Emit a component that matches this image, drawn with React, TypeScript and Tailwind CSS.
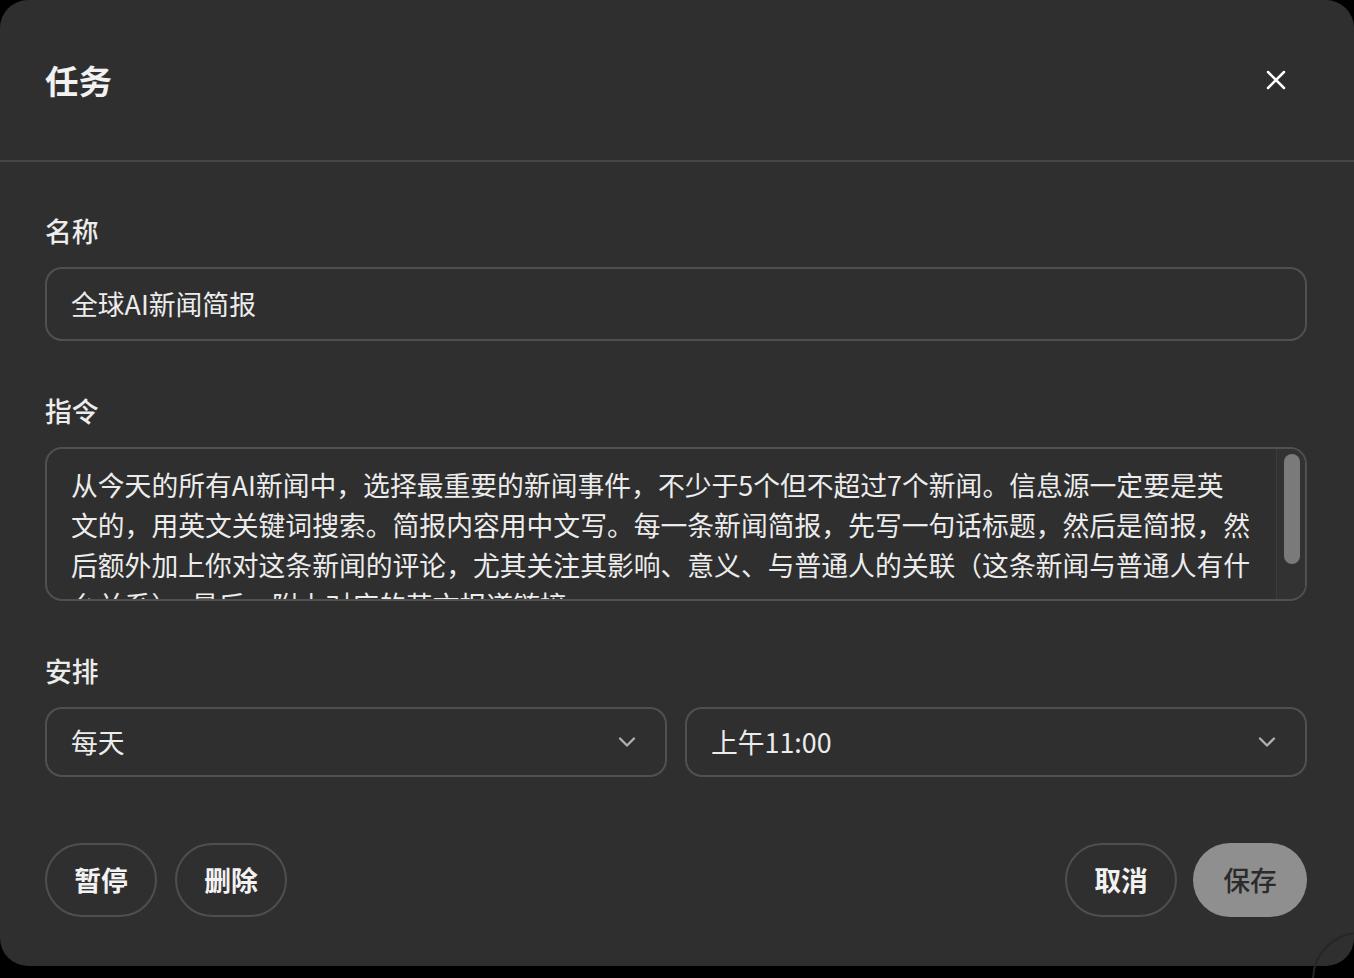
import React from "react"
import { ChevronDown } from "lucide-react"

const lines = [
  "从今天的所有AI新闻中，选择最重要的新闻事件，不少于5个但不超过7个新闻。信息源一定要是英",
  "文的，用英文关键词搜索。简报内容用中文写。每一条新闻简报，先写一句话标题，然后是简报，然",
  "后额外加上你对这条新闻的评论，尤其关注其影响、意义、与普通人的关联（这条新闻与普通人有什",
  "么关系）。最后，附上对应的英文报道链接。",
]

const Label: React.FC<{ children: React.ReactNode }> = ({ children }) => (
  <div className="text-[26.8px] leading-[40px] font-medium text-[#ececec] mb-4">{children}</div>
)

const Select: React.FC<{ value: string }> = ({ value }) => (
  <div className="h-[70px] rounded-[17px] border-2 border-[#505050] pl-[24px] pr-[24px] flex items-center justify-between">
    <span className="text-[26.8px] text-[#ececec]">{value}</span>
    <ChevronDown size={28} strokeWidth={2} className="text-[#b0b0b0]" />
  </div>
)

export default function App() {
  return (
    <div className="relative h-[978px] w-full overflow-hidden bg-black font-['Noto_Sans_CJK_SC',sans-serif]">
      <div className="h-[966px] w-full rounded-[28px] bg-[#2f2f2f] flex flex-col">
        {/* Header */}
        <div className="h-[162px] shrink-0 border-b-2 border-[#464646] pl-[45px] pr-[58px] flex items-center justify-between">
          <h2 className="text-[33.5px] font-semibold text-[#f2f2f2]">任务</h2>
          <button className="w-[40px] h-[40px] flex items-center justify-center">
            <svg width="20" height="20" viewBox="0 0 20 20" fill="none" stroke="#ffffff" strokeWidth="2.5" strokeLinecap="round">
              <path d="M2 2 18 18M18 2 2 18" />
            </svg>
          </button>
        </div>

        {/* Body */}
        <div className="pl-[45px] pr-[47px] pt-[49px] flex flex-col">
          <Label>名称</Label>
          <div className="h-[74px] rounded-[17px] border-2 border-[#505050] px-[24px] flex items-center">
            <span className="text-[26.8px] text-[#ececec]">全球AI新闻简报</span>
          </div>

          <div className="mt-[50px]">
            <Label>指令</Label>
            <div className="h-[154px] rounded-[17px] border-2 border-[#505050] flex overflow-hidden">
              <div className="flex-1 pl-[24px] pt-[16px] text-[26.8px] leading-[40px] text-[#ececec] overflow-hidden">
                {lines.map((l, i) => (
                  <div key={i} className="whitespace-nowrap">{l}</div>
                ))}
              </div>
              <div className="w-[29px] shrink-0 border-l border-[#3c3c3c] bg-[#323232] pl-[7px] pt-[5px]">
                <div className="w-[16px] h-[110px] rounded-full bg-[#7a7a7a]" />
              </div>
            </div>
          </div>

          <div className="mt-[50px]">
            <Label>安排</Label>
            <div className="grid grid-cols-2 gap-[18px]">
              <Select value="每天" />
              <Select value="上午11:00" />
            </div>
          </div>

          {/* Footer buttons */}
          <div className="mt-[66px] flex items-center justify-between">
            <div className="flex gap-[18px]">
              <button className="h-[74px] w-[112px] rounded-full border-2 border-[#4f4f4f] text-[26.8px] font-semibold text-[#f2f2f2]">暂停</button>
              <button className="h-[74px] w-[112px] rounded-full border-2 border-[#4f4f4f] text-[26.8px] font-semibold text-[#f2f2f2]">删除</button>
            </div>
            <div className="flex gap-[16px]">
              <button className="h-[74px] w-[112px] rounded-full border-2 border-[#4f4f4f] text-[26.8px] font-semibold text-[#f2f2f2]">取消</button>
              <button className="h-[74px] w-[114px] rounded-full bg-[#8f8f8f] text-[26.8px] font-medium text-[#2b2b2b]">保存</button>
            </div>
          </div>
        </div>
      </div>

      {/* partly hidden round button behind the corner */}
      <div className="absolute left-[1312px] top-[932px] w-[96px] h-[96px] rounded-full border-2 border-[#262626]" />
    </div>
  )
}
